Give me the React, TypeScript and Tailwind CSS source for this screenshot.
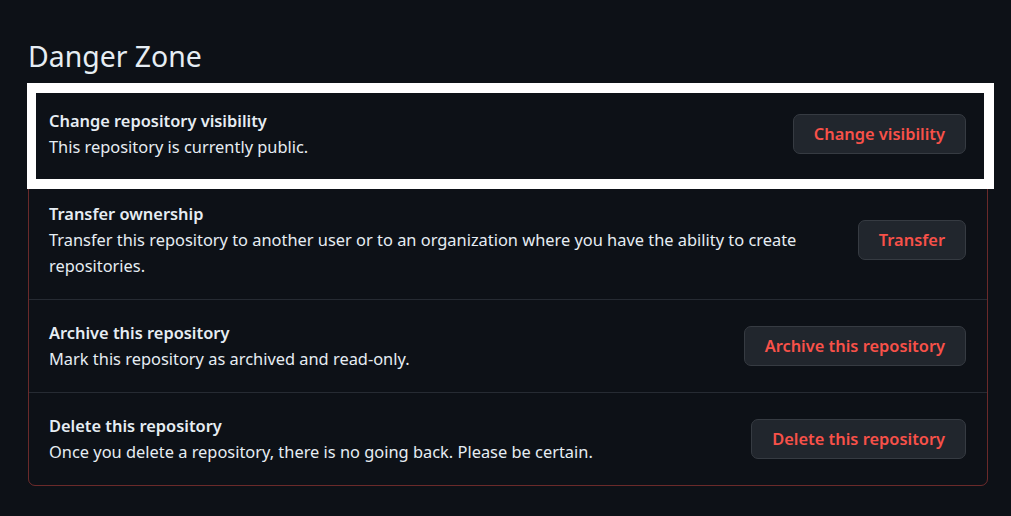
import React from 'react';

type Row = {
  title: string;
  description: string;
  action: string;
};

const rows: Row[] = [
  {
    title: 'Change repository visibility',
    description: 'This repository is currently public.',
    action: 'Change visibility',
  },
  {
    title: 'Transfer ownership',
    description:
      'Transfer this repository to another user or to an organization where you have the ability to create repositories.',
    action: 'Transfer',
  },
  {
    title: 'Archive this repository',
    description: 'Mark this repository as archived and read-only.',
    action: 'Archive this repository',
  },
  {
    title: 'Delete this repository',
    description: 'Once you delete a repository, there is no going back. Please be certain.',
    action: 'Delete this repository',
  },
];

const DangerRow: React.FC<{ row: Row; highlighted?: boolean; first?: boolean }> = ({ row, highlighted, first }) => {
  return (
    <div className={`relative flex items-center justify-between gap-8 pl-5 pr-[21px] py-5 ${first ? '' : 'border-t border-[#262b33]'}`}>
      <div className="flex flex-col max-w-[760px]">
        <h3 className="text-[16.4px] leading-[26px] font-semibold text-[#e6edf3]">{row.title}</h3>
        <p className="text-[16.4px] leading-[26px] text-[#e6edf3]">{row.description}</p>
      </div>
      <button className="shrink-0 h-10 px-5 rounded-[7px] border border-[#363b42] bg-[#21262d] text-[16.4px] font-semibold text-[#f85149]">
        {row.action}
      </button>

      {/* Annotation frame over the first row */}
      {highlighted && (
        <div className="pointer-events-none absolute z-10 -left-[2px] -right-[7px] -top-[5px] -bottom-[9px] border-[10px] border-l-[9px] border-white" />
      )}
    </div>
  );
};

export default function App() {
  return (
    <div
      className="min-h-[516px] w-full bg-[#0d1117] pl-7 pt-[36px]"
      style={{ fontFamily: '"Noto Sans", "Open Sans", Arial, sans-serif' }}
    >
      <h2 className="text-[28.4px] leading-[40px] font-normal text-[#e6edf3] mb-[11px]">Danger Zone</h2>

      <div className="w-[960px] rounded-[7px] border border-[#f8514966]">
        {rows.map((row, i) => (
          <DangerRow key={row.title} row={row} first={i === 0} highlighted={i === 0} />
        ))}
      </div>
    </div>
  );
}
